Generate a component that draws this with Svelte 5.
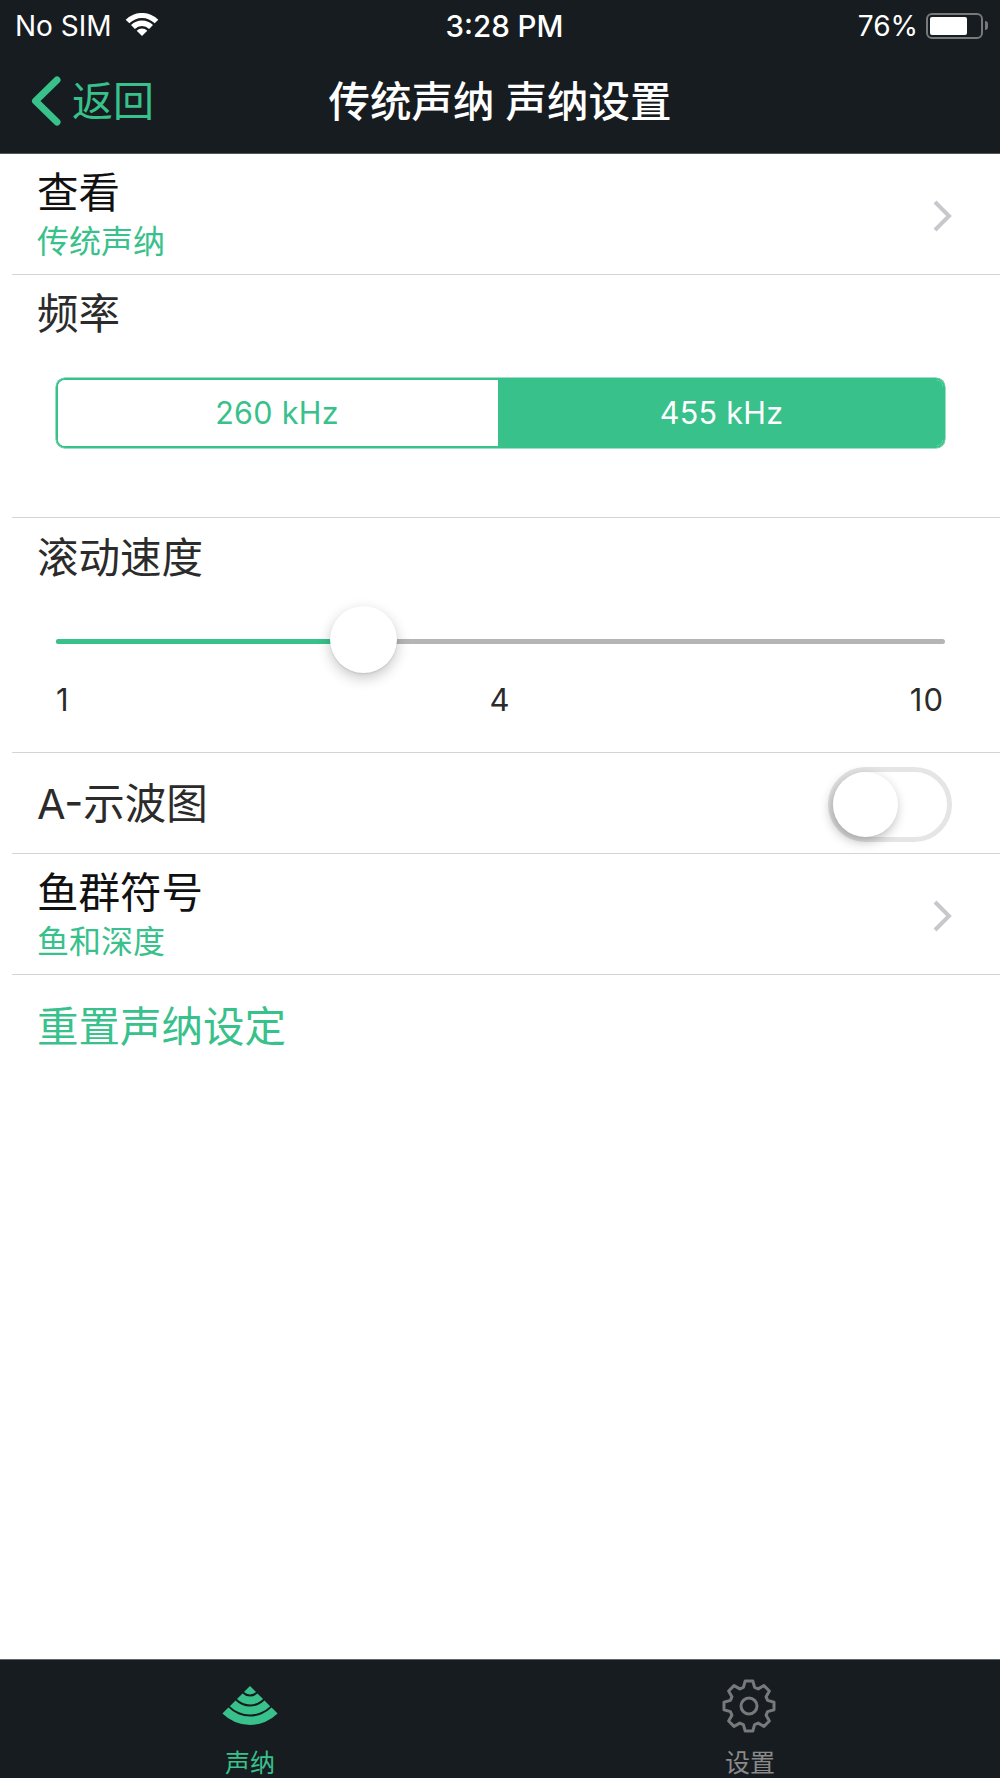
<script>
    let freqs = ["260 kHz", "455 kHz"]
    let selectedFreq = $state("455 kHz")
    let speed = 34.5
    let showScope = $state(false)

    // gear outline: 8 teeth round (0,0)
    function gearPath() {
        let d = ""
        for (let i = 0; i < 8; i++) {
            let a = (i * Math.PI) / 4 - Math.PI / 2
            let pts = [
                [-5.6, 18.6],
                [-3.8, 25],
                [3.8, 25],
                [5.6, 18.6]
            ]
            for (let p of pts) {
                let x = p[1] * Math.cos(a) - p[0] * Math.sin(a)
                let y = p[1] * Math.sin(a) + p[0] * Math.cos(a)
                d += (d ? "L" : "M") + x.toFixed(2) + " " + y.toFixed(2)
            }
        }
        return d + "Z"
    }

    // one ring of the sonar cone, apex at (28,0), 45 degrees each side
    function band(r0, r1) {
        let k = Math.SQRT1_2
        let p = (r, s) => (28 + s * r * k).toFixed(2) + " " + (r * k).toFixed(2)
        if (r0 === 0) return `M28 0 L${p(r1, 1)} A${r1} ${r1} 0 0 1 ${p(r1, -1)} Z`
        return `M${p(r0, -1)} A${r0} ${r0} 0 0 0 ${p(r0, 1)} L${p(r1, 1)} A${r1} ${r1} 0 0 1 ${p(r1, -1)} Z`
    }

    let bands = [[0, 8.5], [10.5, 18.5], [20.5, 28.5], [30.5, 39]]
</script>

<div class="page">
    <header>
        <div class="status">
            <div class="statusLeft">
                <span>No SIM</span>
                <svg class="wifi" width="34" height="24" viewBox="0 0 34 24">
                    <path d="M17 23 L11.7 17.7 A7.5 7.5 0 0 1 22.3 17.7 Z" fill="#fff" />
                    <path d="M9.9 15.9 L6 12 A15.5 15.5 0 0 1 28 12 L24.1 15.9 A10 10 0 0 0 9.9 15.9 Z" fill="#fff" />
                    <path d="M4.3 10.3 L0.7 6.7 A23 23 0 0 1 33.3 6.7 L29.7 10.3 A18 18 0 0 0 4.3 10.3 Z" fill="#fff" />
                </svg>
            </div>
            <span class="time">3:28 PM</span>
            <div class="statusRight">
                <span>76%</span>
                <div class="battery"><div class="batteryFill" style="width: {76}%"></div></div>
                <div class="batteryCap"></div>
            </div>
        </div>
        <div class="navbar">
            <div class="back">
                <svg width="32" height="52" viewBox="0 0 32 52">
                    <path d="M27 5 L5.5 26 L27 47" fill="none" stroke="#38c18b" stroke-width="7" stroke-linecap="round" stroke-linejoin="round" />
                </svg>
                <span>返回</span>
            </div>
            <h1>传统声纳 声纳设置</h1>
        </div>
    </header>

    <main>
        <div class="row linkRow">
            <div>
                <div class="label dark">查看</div>
                <div class="sub">传统声纳</div>
            </div>
            <svg class="chevron" width="20" height="34" viewBox="0 0 20 34">
                <path d="M3 3 L17 17 L3 31" fill="none" stroke="#c7c7cc" stroke-width="4" />
            </svg>
        </div>

        <div class="row freqRow">
            <div class="label">频率</div>
            <div class="segmented">
                {#each freqs as freq}
                    <button class={selectedFreq === freq ? "selected" : ""} onclick={() => (selectedFreq = freq)}>{freq}</button>
                {/each}
            </div>
        </div>

        <div class="row speedRow">
            <div class="label">滚动速度</div>
            <div class="slider">
                <div class="track">
                    <div class="trackFill" style="width: {speed}%"></div>
                </div>
                <div class="knob" style="left: {speed}%"></div>
            </div>
            <div class="ticks">
                <span>1</span>
                <span>4</span>
                <span>10</span>
            </div>
        </div>

        <div class="row scopeRow">
            <div class="label">A-示波图</div>
            <button class="toggle" class:on={showScope} aria-label="A-示波图" onclick={() => (showScope = !showScope)}>
                <span class="toggleKnob"></span>
            </button>
        </div>

        <div class="row linkRow">
            <div>
                <div class="label dark">鱼群符号</div>
                <div class="sub">鱼和深度</div>
            </div>
            <svg class="chevron" width="20" height="34" viewBox="0 0 20 34">
                <path d="M3 3 L17 17 L3 31" fill="none" stroke="#c7c7cc" stroke-width="4" />
            </svg>
        </div>

        <div class="reset">重置声纳设定</div>
    </main>

    <nav>
        <div class="tab active">
            <svg width="56" height="40" viewBox="0 0 56 40">
                {#each bands as b}
                    <path d={band(b[0], b[1])} fill="#38c18b" />
                {/each}
            </svg>
            <span>声纳</span>
        </div>
        <div class="tab">
            <svg class="gear" width="56" height="56" viewBox="-28 -28 56 56">
                <path d={gearPath()} fill="none" stroke="#77797b" stroke-width="3" stroke-linejoin="round" />
                <circle r="8" fill="none" stroke="#77797b" stroke-width="3" />
            </svg>
            <span>设置</span>
        </div>
    </nav>
</div>

<style>
    :global(body) {
        margin: 0;
        background: #fff;
    }

    .page {
        width: 1000px;
        height: 1778px;
        display: flex;
        flex-direction: column;
        overflow: hidden;
        font-family: Inter, "Noto Sans CJK SC", sans-serif;
        color: #2b2b2b;
    }

    header {
        height: 154px;
        background: #171c20;
        color: #fff;
        border-bottom: 1px solid #555;
        box-sizing: border-box;
    }

    .status {
        height: 50px;
        padding: 1px 12px 0 15px;
        box-sizing: border-box;
        display: flex;
        align-items: center;
        justify-content: space-between;
        font-size: 28px;
        position: relative;
    }

    .statusLeft, .statusRight {
        display: flex;
        align-items: center;
    }

    .wifi {
        margin-left: 13px;
        margin-bottom: 2px;
    }

    .time {
        position: absolute;
        left: 9px;
        right: 0;
        text-align: center;
        font-size: 29.5px;
        font-weight: 500;
    }

    .battery {
        width: 57px;
        height: 26px;
        margin-left: 8px;
        padding: 2px;
        box-sizing: border-box;
        border: 2px solid #77797b;
        border-radius: 6px;
    }

    .batteryFill {
        height: 100%;
        background: #fff;
        border-radius: 2px;
    }

    .batteryCap {
        width: 3px;
        height: 9px;
        margin-left: 2px;
        background: #77797b;
        border-radius: 0 3px 3px 0;
    }

    .navbar {
        height: 103px;
        display: flex;
        align-items: center;
        justify-content: center;
        position: relative;
    }

    .back {
        position: absolute;
        left: 30px;
        top: 24px;
        display: flex;
        align-items: center;
        gap: 10px;
        color: #38c18b;
        font-size: 41px;
    }

    .back span {
        margin-top: -6px;
    }

    h1 {
        margin: 0 0 6px;
        font-size: 41.5px;
        font-weight: 500;
    }

    main {
        flex: 1;
    }

    .row {
        margin-left: 12px;
        padding: 0 42px 0 25px;
        border-bottom: 1px solid #d4d4d4;
        box-sizing: border-box;
    }

    .label {
        font-size: 41.5px;
        line-height: 50px;
    }

    .dark {
        color: #111;
    }

    .sub {
        margin-top: 5px;
        font-size: 32px;
        line-height: 38px;
        color: #38c18b;
    }

    .linkRow {
        height: 121px;
        display: flex;
        align-items: center;
        justify-content: space-between;
        padding-right: 48px;
    }

    .chevron {
        margin-top: 3px;
    }

    .freqRow {
        height: 243px;
        padding-top: 14px;
    }

    .segmented {
        margin: 39px 0 0 19px;
        width: 889px;
        height: 70px;
        display: flex;
        border: 2px solid #38c18b;
        border-radius: 9px;
        box-sizing: border-box;
        overflow: hidden;
        box-shadow: 0 0 0 0.5px #38c18b;
    }

    .segmented button {
        flex: 0 0 auto;
        width: 440px;
        border: none;
        padding: 0 0 2px;
        background: #fff;
        color: #38c18b;
        font: inherit;
        font-size: 30.5px;
        letter-spacing: 0.3px;
    }

    .segmented button:first-child {
        padding-right: 2px;
    }

    .segmented button:last-child {
        flex: 1;
        padding-left: 2px;
    }

    .segmented button.selected {
        background: #38c18b;
        color: #fff;
    }

    .speedRow {
        height: 235px;
        padding-top: 15px;
    }

    .slider {
        position: relative;
        margin: 23px 0 0 19px;
        width: 889px;
        height: 67px;
        display: flex;
        align-items: center;
    }

    .track {
        width: 100%;
        height: 5px;
        margin-top: 4px;
        border-radius: 3px;
        background: #b5b5b5;
    }

    .trackFill {
        height: 100%;
        border-radius: 3px;
        background: #38c18b;
    }

    .knob {
        position: absolute;
        top: 0;
        width: 67px;
        height: 67px;
        margin-left: -33px;
        border-radius: 50%;
        background: #fff;
        box-shadow: 0 5px 14px rgba(0, 0, 0, 0.22), 0 1px 2px rgba(0, 0, 0, 0.1);
    }

    .ticks {
        margin: 7px 14px 0 19px;
        display: grid;
        grid-template-columns: 1fr auto 1fr;
        font-size: 31px;
        line-height: 40px;
        letter-spacing: 1px;
    }

    .ticks span:last-child {
        text-align: right;
    }

    .scopeRow {
        height: 101px;
        display: flex;
        align-items: center;
        justify-content: space-between;
        padding-right: 48px;
        padding-top: 3px;
    }

    .scopeRow .label {
        margin-bottom: 1px;
    }

    .toggle {
        width: 124px;
        height: 75px;
        padding: 0;
        border: 5px solid #e5e5e5;
        border-radius: 38px;
        background: #fff;
        display: flex;
        box-sizing: border-box;
    }

    .toggle.on {
        justify-content: flex-end;
        background: #38c18b;
        border-color: #38c18b;
    }

    .toggleKnob {
        width: 65px;
        height: 65px;
        border-radius: 50%;
        background: #fff;
        box-shadow: -2px 4px 12px rgba(0, 0, 0, 0.3);
    }

    .reset {
        margin-left: 37px;
        padding-top: 27px;
        font-size: 41.5px;
        line-height: 50px;
        color: #38c18b;
    }

    nav {
        height: 119px;
        background: #171c20;
        border-top: 1px solid #666;
        box-sizing: border-box;
        display: flex;
    }

    .tab {
        flex: 1;
        display: flex;
        flex-direction: column;
        align-items: center;
        color: #8a8a8a;
        font-size: 25px;
        line-height: 28px;
        padding-top: 18px;
        box-sizing: border-box;
        position: relative;
    }

    .gear {
        margin-left: -2px;
    }

    .tab span {
        position: absolute;
        top: 89px;
    }

    .tab.active {
        color: #38c18b;
        padding-top: 26px;
    }
</style>
